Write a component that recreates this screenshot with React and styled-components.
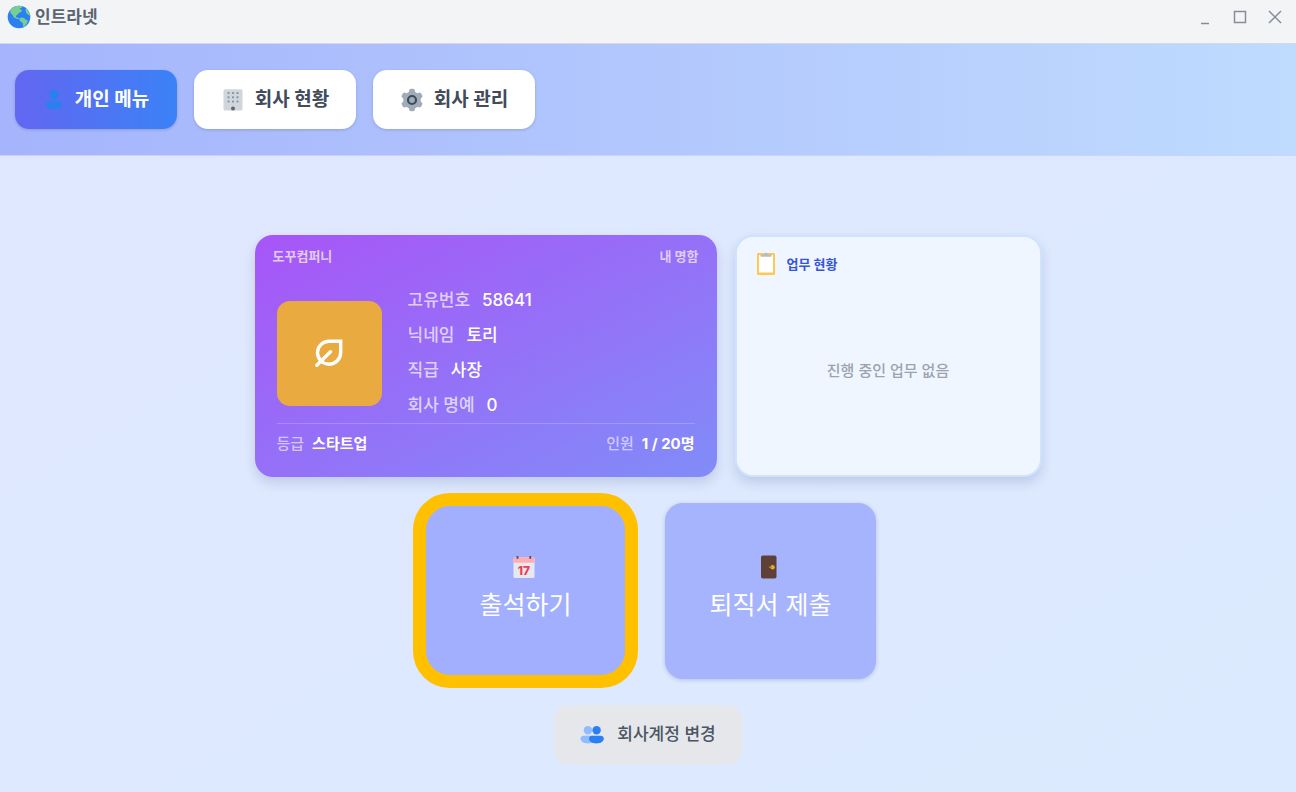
import styled, { createGlobalStyle, css } from "styled-components";

const GlobalStyle = createGlobalStyle`
  * {
    box-sizing: border-box;
  }

  body {
    margin: 0;
    background-color: #dde8fe;
  }

  body, button {
    font-family: Inter, "Noto Sans CJK KR", sans-serif;
  }

  h1, h2, p, dl, dd {
    margin: 0;
  }
`;

const Window = styled.div`
  display: flex;
  flex-direction: column;
  min-height: 100vh;
  background: linear-gradient(to bottom right, #e0e7ff, #dbeafe);
`;

const TitleBar = styled.header`
  display: flex;
  align-items: center;
  justify-content: space-between;
  height: 44px;
  padding: 0 12px 10px 7px;
  background-color: #f3f4f6;
  border-bottom: 1px solid #d5daea;
`;

const AppTitle = styled.h1`
  display: flex;
  align-items: center;
  gap: 4px;
  color: #5b6472;
  font-size: 17px;
  font-weight: 700;
  line-height: 24px;
`;

const WindowControls = styled.div`
  display: flex;
  gap: 17px;
`;

const WindowButton = styled.button`
  display: flex;
  width: 18px;
  height: 18px;
  padding: 0;
  border: 0;
  background: none;
  color: #868d99;
`;

const Nav = styled.nav`
  display: flex;
  gap: 17px;
  padding: 26px 15px;
  background: linear-gradient(90deg, #a5b4fc, #bfdbfe);
  border-bottom: 1px solid #c7d5fd;
`;

const MenuButton = styled.button`
  display: flex;
  align-items: center;
  justify-content: center;
  gap: 10px;
  min-width: 162px;
  height: 59px;
  padding: 1px 26px 0;
  border: 0;
  border-radius: 14px;
  background: #fff;
  color: #414b5a;
  font-size: 19px;
  font-weight: 700;
  line-height: 28px;
  box-shadow: 0 1px 3px rgba(30, 41, 99, 0.2);

  ${({ $active }) => $active && css`
    background: linear-gradient(90deg, #6366f1, #3b82f6);
    color: #fff;
  `}
`;

const Main = styled.main`
  display: flex;
  flex-direction: column;
  align-items: center;
  gap: 26px;
  padding: 79px 20px 27px;
`;

const Cards = styled.div`
  display: flex;
  flex-wrap: wrap;
  justify-content: center;
  gap: 18px;
`;

const ProfileCard = styled.section`
  display: flex;
  flex-direction: column;
  width: 462px;
  min-height: 242px;
  padding: 12px 22px 22px;
  border-radius: 18px;
  background: linear-gradient(to bottom right, #a855f7, #818cf8);
  color: #fff;
  box-shadow: 0 6px 12px rgba(30, 41, 99, 0.15);
`;

const CardHeader = styled.div`
  display: flex;
  justify-content: space-between;
  margin: 0 -4px;
  color: #e0cbfd;
  font-size: 13px;
  font-weight: 700;
  line-height: 18px;
`;

const CardBody = styled.div`
  display: flex;
  align-items: center;
  gap: 26px;
  padding: 23px 0 5px;
`;

const Avatar = styled.div`
  display: flex;
  align-items: center;
  justify-content: center;
  width: 105px;
  height: 105px;
  border-radius: 13px;
  background-color: #e9aa40;
`;

const InfoList = styled.dl`
  display: flex;
  flex-direction: column;
  gap: 10px;
`;

const Info = styled.div`
  display: flex;
  gap: ${({ $small }) => ($small ? "8px" : "12px")};
  font-size: ${({ $small }) => ($small ? "15px" : "17px")};
  font-weight: ${({ $small }) => ($small ? 700 : 500)};
  line-height: ${({ $small }) => ($small ? "20px" : "25px")};

  dt {
    color: rgba(255, 255, 255, ${({ $small }) => ($small ? 0.6 : 0.7)});
    font-weight: 500;
  }
`;

const CardFooter = styled.dl`
  display: flex;
  justify-content: space-between;
  padding-top: 10px;
  border-top: 1px solid rgba(255, 255, 255, 0.2);
`;

const WorkCard = styled.section`
  display: flex;
  flex-direction: column;
  width: 307px;
  min-height: 242px;
  padding: 15px 17px 10px;
  border: 2px solid #cfe2fe;
  border-radius: 18px;
  background-color: #eff6ff;
  box-shadow: 0 6px 12px rgba(30, 41, 99, 0.15);
`;

const WorkTitle = styled.h2`
  display: flex;
  align-items: center;
  gap: 9px;
  color: #3654d6;
  font-size: 13px;
  font-weight: 700;
  line-height: 24px;
`;

const EmptyText = styled.p`
  margin: auto;
  color: #9ca3af;
  font-size: 15px;
  font-weight: 500;
  line-height: 22px;
`;

const Actions = styled.div`
  display: flex;
  flex-wrap: wrap;
  justify-content: center;
  gap: 34px;
`;

const ActionButton = styled.button`
  position: relative;
  display: flex;
  flex-direction: column;
  align-items: center;
  justify-content: center;
  gap: 7px;
  width: 211px;
  height: 176px;
  padding: 0 0 4px;
  border: 0;
  border-radius: 18px;
  background-color: #a6b4fd;
  color: #fff;
  font-size: 25px;
  line-height: 38px;
  box-shadow: 0 1px 4px rgba(30, 41, 99, 0.2);

  svg {
    margin-right: 4px;
  }

  ${({ $highlighted }) => $highlighted && css`
    background-color: #a2affe;

    &::after {
      content: "";
      position: absolute;
      inset: -10px -7px -9px;
      border: 13px solid #ffc000;
      border-radius: 37px;
    }
  `}
`;

const SwitchButton = styled.button`
  display: flex;
  align-items: center;
  justify-content: center;
  gap: 13px;
  min-width: 187px;
  height: 59px;
  padding: 0 26px;
  border: 0;
  border-radius: 14px;
  background-color: #e5e7eb;
  color: #4b5563;
  font-size: 17px;
  font-weight: 500;
  line-height: 25px;
`;

function GlobeIcon() {
  return (
    <svg width="24" height="24" viewBox="0 0 24 24" aria-hidden="true">
      <circle cx="12" cy="12" r="11.3" fill="#2b7ff3" />
      <path
        d="M3.200 5C5.500 2.200 8.500.8 12 .7c1.300 0 2.500.2 3.600.6l-.8 1.500-2 .5 1 1.400 1.600.8-1.900 1.700-1.600.6-1.400 2-1.700.9.3 1.400 2 .6 1.300 1.600-2-.3-3.500-1.600-1.500-2.600L3.500 8Z"
        fill="#74cf91"
      />
      <path d="m12.500 13.300 1.900-.9 2.700.6 1.300 1.500 2.500 1-.8 2.500-1.500 1.900-1.200 2-1.400-.6-.2-3-1.900-1.600-1.400-1.500Z" fill="#74cf91" />
      <path d="m18.300 4.300 1.500-.2c1.900 1.900 3 4 3.400 6.400l-1.800-.6-2.200-1.900Z" fill="#74cf91" />
    </svg>
  );
}

function PersonIcon() {
  return (
    <svg width="22" height="24" viewBox="0 0 22 24" aria-hidden="true">
      <circle cx="11" cy="6.700" r="4.900" fill="#2b80f0" />
      <path d="M6 13.300h10c2 0 3.300 1.300 3.300 3.200 0 3-3.400 4.700-8.300 4.700s-8.300-1.700-8.300-4.700c0-1.900 1.300-3.200 3.300-3.200Z" fill="#2b80f0" />
    </svg>
  );
}

function BuildingIcon() {
  return (
    <svg width="24" height="24" viewBox="0 0 24 24" aria-hidden="true">
      <rect x="2.500" y="1.200" width="19" height="21.300" rx="1.500" fill="#d0d6dc" />
      <g fill="#8b95a1">
        {[4, 8.200, 12.400].map((y) =>
          [6.500, 11, 15.500].map((x) => (
            <rect key={`${x}-${y}`} x={x} y={y} width="2" height="2" rx="0.500" />
          ))
        )}
      </g>
      <circle cx="12" cy="20.500" r="2" fill="#5c6877" />
    </svg>
  );
}

function GearIcon() {
  const teeth = [0, 60, 120, 180, 240, 300];
  return (
    <svg width="24" height="24" viewBox="0 0 24 24" aria-hidden="true">
      <g fill="#a0adb9">
        <circle cx="12" cy="12" r="8.800" />
        {teeth.map((angle) => (
          <rect key={angle} x="9" y="0.800" width="6" height="7" rx="2.200" transform={`rotate(${angle} 12 12)`} />
        ))}
      </g>
      <circle cx="12" cy="12" r="4" fill="#a0adb9" stroke="#3f4b5a" strokeWidth="2.200" />
    </svg>
  );
}

function LeafIcon() {
  return (
    <svg width="32" height="32" viewBox="0 0 32 32" fill="none" stroke="#fff" strokeWidth="3.400" aria-hidden="true">
      <path d="M27.700 4.300V15.500A11.700 11.700 0 0 1 16 27.200A11.500 11.500 0 0 1 4.500 15.800A11.500 11.500 0 0 1 16 4.300Z" />
      <path d="M3.800 28.200 17.500 14.800" strokeLinecap="round" />
    </svg>
  );
}

function ClipboardIcon() {
  return (
    <svg width="24" height="24" viewBox="0 0 24 24" aria-hidden="true">
      <rect x="3" y="1" width="18" height="22" rx="1" fill="#ffc84e" />
      <rect x="5" y="3" width="14" height="17.500" fill="#fff" />
      <path d="M6.500 2.500h3.700c0-2.500 3.600-2.500 3.600 0h3.700v1.300c0 .7-.5 1-1 1h-9c-.6 0-1-.3-1-1Z" fill="#b4bcc5" />
    </svg>
  );
}

function CalendarIcon() {
  return (
    <svg width="24" height="24" viewBox="0 0 24 24" aria-hidden="true">
      <rect x="1.500" y="2.500" width="21" height="20.500" rx="1.500" fill="#e7e9ef" />
      <path d="M3 2.200h18c.9 0 1.500.6 1.500 1.500v4.100h-21V3.700c0-.9.6-1.500 1.500-1.500Z" fill="#ffadb3" />
      <path d="M5.500 1v2.800M18.300 1v2.800" stroke="#4b4b62" strokeWidth="1.800" />
      <text x="12" y="19.500" textAnchor="middle" fontFamily="Inter, sans-serif" fontSize="12" fontWeight="800" fill="#ed3e53">17</text>
    </svg>
  );
}

function DoorIcon() {
  return (
    <svg width="24" height="24" viewBox="0 0 24 24" aria-hidden="true">
      <rect x="4" y="0.500" width="15.500" height="23" rx="1.800" fill="#5d4037" />
      <circle cx="15.600" cy="12.300" r="2.200" fill="#e2ac2e" />
      <path d="M12 12.300h3" stroke="#c28b24" strokeWidth="1.200" />
    </svg>
  );
}

function PeopleIcon() {
  return (
    <svg width="24" height="24" viewBox="0 0 24 24" aria-hidden="true">
      <g fill="#8ebcff">
        <circle cx="7.900" cy="7.300" r="4.200" />
        <path d="M3.700 12.800h8.700c1.600 0 2.800 1.200 2.800 2.800 0 3-2.900 4.900-7.200 4.900S.5 18.600.5 15.600c0-1.600 1.600-2.800 3.200-2.800Z" />
      </g>
      <g fill="#2b7ff3">
        <circle cx="16.600" cy="7.300" r="4.200" />
        <path d="M11.900 12.800h8.900c1.600 0 3 1.200 3 2.800 0 3-2.900 4.900-7.400 4.900s-7.400-1.900-7.400-4.900c0-1.600 1.300-2.800 2.900-2.800Z" />
      </g>
    </svg>
  );
}

const menus = [
  { label: "개인 메뉴", Icon: PersonIcon, active: true },
  { label: "회사 현황", Icon: BuildingIcon },
  { label: "회사 관리", Icon: GearIcon },
];

const profile = [
  ["고유번호", "58641"],
  ["닉네임", "토리"],
  ["직급", "사장"],
  ["회사 명예", "0"],
];

const windowControls = [
  { label: "최소화", path: "M5 15.500h8" },
  { label: "최대화", path: "M3.500 3.500h11v11h-11Z" },
  { label: "닫기", path: "m3 3 12 12M15 3 3 15" },
];

function App() {
  return (
    <Window>
      <GlobalStyle />
      <TitleBar>
        <AppTitle><GlobeIcon />인트라넷</AppTitle>
        <WindowControls>
          {windowControls.map(({ label, path }) => (
            <WindowButton key={label} type="button" aria-label={label}>
              <svg width="18" height="18" viewBox="0 0 18 18" fill="none" stroke="currentColor" strokeWidth="1.500">
                <path d={path} />
              </svg>
            </WindowButton>
          ))}
        </WindowControls>
      </TitleBar>
      <Nav>
        {menus.map(({ label, Icon, active }) => (
          <MenuButton key={label} type="button" $active={active}>
            <Icon />{label}
          </MenuButton>
        ))}
      </Nav>
      <Main>
        <Cards>
          <ProfileCard>
            <CardHeader>
              <span>도꾸컴퍼니</span>
              <span>내 명함</span>
            </CardHeader>
            <CardBody>
              <Avatar><LeafIcon /></Avatar>
              <InfoList>
                {profile.map(([label, value]) => (
                  <Info key={label}>
                    <dt>{label}</dt>
                    <dd>{value}</dd>
                  </Info>
                ))}
              </InfoList>
            </CardBody>
            <CardFooter>
              <Info $small>
                <dt>등급</dt>
                <dd>스타트업</dd>
              </Info>
              <Info $small>
                <dt>인원</dt>
                <dd>1 / 20명</dd>
              </Info>
            </CardFooter>
          </ProfileCard>
          <WorkCard>
            <WorkTitle><ClipboardIcon />업무 현황</WorkTitle>
            <EmptyText>진행 중인 업무 없음</EmptyText>
          </WorkCard>
        </Cards>
        <Actions>
          <ActionButton type="button" $highlighted>
            <CalendarIcon />출석하기
          </ActionButton>
          <ActionButton type="button">
            <DoorIcon />퇴직서 제출
          </ActionButton>
        </Actions>
        <SwitchButton type="button"><PeopleIcon />회사계정 변경</SwitchButton>
      </Main>
    </Window>
  );
}

export default App;
